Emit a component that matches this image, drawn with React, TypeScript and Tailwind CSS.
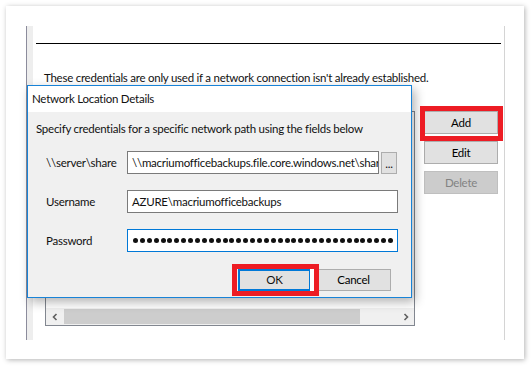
import React from "react";

const dots = Array.from({ length: 38 });

function WinButton(
  { label, disabled, className }: {
    label: string;
    disabled?: boolean;
    className?: string;
  },
) {
  return (
    <div
      className={`flex items-center justify-center border ${
        disabled
          ? "bg-[#cccccc] border-[#bfbfbf] text-[#838383]"
          : "bg-[#e1e1e1] border-[#adadad] text-black"
      } ${className ?? ""}`}
    >
      {label}
    </div>
  );
}

function NetworkDialog() {
  return (
    <div className="absolute left-[27px] top-[85px] w-[385px] h-[213px] border border-[#1883d7] bg-[#f0f0f0] shadow-[3px_4px_10px_rgba(0,0,0,0.3)] overflow-hidden">
      <div className="h-[26px] bg-white flex items-center pl-[4px]">
        Network Location Details
      </div>
      <div className="pt-[9px]">
        <p className="pl-[8px] leading-[16px] whitespace-nowrap">
          Specify credentials for a specific network path using the fields below
        </p>

        <div className="flex items-center mt-[14px] h-[23px]">
          <span className="ml-[18px] w-[81px] whitespace-nowrap">\\server\share</span>
          <div className="w-[252px] h-[23px] bg-white border border-[#7a7a7a] pl-[4px] overflow-hidden whitespace-nowrap flex items-center">
            \\macriumofficebackups.file.core.windows.net\share
          </div>
          <div className="ml-[2px] w-[16px] h-[22px] bg-[#e1e1e1] border border-[#adadad] flex items-end justify-center leading-[14px] pb-[2px]">
            ...
          </div>
        </div>

        <div className="flex items-center mt-[16px] h-[23px]">
          <span className="ml-[18px] w-[81px]">Username</span>
          <div className="w-[271px] h-[23px] bg-white border border-[#7a7a7a] pl-[4px] overflow-hidden whitespace-nowrap flex items-center">
            AZURE\macriumofficebackups
          </div>
        </div>

        <div className="flex items-center mt-[16px] h-[23px]">
          <span className="ml-[18px] w-[81px]">Password</span>
          <div className="w-[271px] h-[23px] bg-white border border-[#0078d7] pl-[5px] overflow-hidden flex items-center gap-[1.9px]">
            {dots.map((_, i) => (
              <span
                key={i}
                className="shrink-0 w-[5px] h-[5px] rounded-full bg-[#111111]"
              />
            ))}
          </div>
        </div>

        <div className="flex justify-end mt-[17px] pr-[20px] gap-[5px]">
          <div className="w-[73px] h-[22px] bg-[#e1e1e1] border-2 border-[#0078d7] flex items-center justify-center">
            OK
          </div>
          <WinButton label="Cancel" className="w-[75px] h-[22px]" />
        </div>
      </div>
    </div>
  );
}

export default function App() {
  return (
    <div className="relative w-[531px] h-[366px] bg-white p-[6px] font-['Lato',sans-serif] text-[11.5px] tracking-[-0.25px] text-[#111111] overflow-hidden">
      <div className="w-[518px] h-[353px] bg-white shadow-[1px_1px_5px_rgba(0,0,0,0.3)] pt-[20px] pl-[20px] pr-[19px] pb-[19px]">
        <div className="flex h-full border-l border-l-[#8c8c9c] border-r border-r-[#d4d4d4]">
          <div className="w-[6px] bg-[#eeeeee]" />
          <div className="flex-1 flex flex-col">
            <div className="mt-[17px] ml-[3px] mr-[3px] h-px bg-black" />
            <p className="mt-[26px] ml-[11px] leading-[16px] whitespace-nowrap">
              These credentials are only used if a network connection isn't
              already established.
            </p>
            <div className="flex mt-[25px] ml-[12px]">
              <div className="w-[370px] h-[215px] border border-[#828790] flex flex-col justify-end">
                <div className="h-[17px] bg-[#f0f0f0] flex items-center">
                  <div className="w-[17px] h-full flex items-center justify-center">
                    <svg width="8" height="8" viewBox="0 0 8 8">
                      <path d="M5.5 1 L2.5 4 L5.5 7" stroke="#606060" strokeWidth="1.6" fill="none" />
                    </svg>
                  </div>
                  <div className="ml-[1px] w-[296px] h-[15px] bg-[#cdcdcd]" />
                  <div className="flex-1" />
                  <div className="w-[17px] h-full flex items-center justify-center">
                    <svg width="8" height="8" viewBox="0 0 8 8">
                      <path d="M2.5 1 L5.5 4 L2.5 7" stroke="#606060" strokeWidth="1.6" fill="none" />
                    </svg>
                  </div>
                </div>
              </div>
              <div className="ml-[9px] flex flex-col gap-[7px]">
                <WinButton label="Add" className="w-[74px] h-[23px]" />
                <WinButton label="Edit" className="w-[74px] h-[23px]" />
                <WinButton label="Delete" disabled className="w-[74px] h-[23px]" />
              </div>
            </div>
          </div>
        </div>
      </div>

      <NetworkDialog />

      <div className="absolute left-[420px] top-[106px] w-[83px] h-[35px] border-[5px] border-[#ed1c24]" />
      <div className="absolute left-[232px] top-[264px] w-[87px] h-[32px] border-[5px] border-[#ed1c24] flex justify-end">
        <div className="w-[4px] h-full bg-white" />
      </div>
    </div>
  );
}
